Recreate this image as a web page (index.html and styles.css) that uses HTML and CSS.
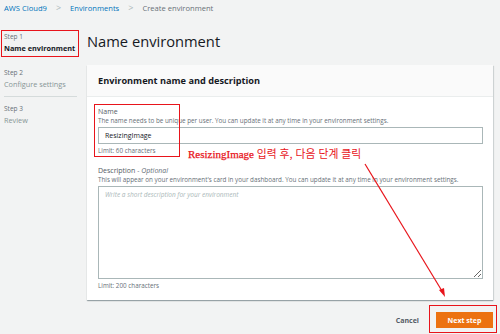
FILE: index.html
```html
<!DOCTYPE html>
<html lang="ko">
<head>
    <meta charset="UTF-8">
    <meta name="viewport" content="width=device-width, initial-scale=1.0">
    <title>Create environment</title>
    <link rel="stylesheet" href="styles.css">
</head>
<body>

    <div class="breadcrumb">
        <a href="#">AWS Cloud9</a>
        <span class="sep">&gt;</span>
        <a href="#">Environments</a>
        <span class="sep">&gt;</span>
        <span class="current">Create environment</span>
    </div>

    <div class="layout">
        <!-- Wizard steps -->
        <ul class="steps">
            <li class="step active">
                <div class="step-num">Step 1</div>
                <div class="step-name">Name environment</div>
            </li>
            <li class="step">
                <div class="step-num">Step 2</div>
                <div class="step-name">Configure settings</div>
            </li>
            <li class="step">
                <div class="step-num">Step 3</div>
                <div class="step-name">Review</div>
            </li>
        </ul>

        <div class="main">
            <h1>Name environment</h1>

            <div class="card">
                <div class="card-header">Environment name and description</div>
                <div class="card-body">
                    <div class="field">
                        <div class="label">Name</div>
                        <div class="hint">The name needs to be unique per user. You can update it at any time in your environment settings.</div>
                        <input class="input" type="text" value="ResizingImage">
                        <div class="limit">Limit: 60 characters</div>
                    </div>
                    <div class="field">
                        <div class="label">Description <em>- Optional</em></div>
                        <div class="hint">This will appear on your environment's card in your dashboard. You can update it at any time in your environment settings.</div>
                        <textarea class="textarea" placeholder="Write a short description for your environment"></textarea>
                        <div class="limit">Limit: 200 characters</div>
                    </div>
                </div>
            </div>

            <div class="actions">
                <button class="btn-link">Cancel</button>
                <button class="btn-primary">Next step</button>
            </div>
        </div>
    </div>

    <!-- Annotations drawn over the screenshot -->
    <div class="mark mark-step"></div>
    <div class="mark mark-name"></div>
    <div class="mark mark-next"></div>
    <div class="note">ResizingImage <span class="ko">입력 후, 다음 단계 클릭</span></div>
    <svg class="arrow" width="500" height="334" viewBox="0 0 500 334">
        <line x1="365" y1="164" x2="442" y2="291" stroke="#e8141b" stroke-width="1.2"/>
        <polygon points="445,297 439,290 444,288" fill="#e8141b"/>
    </svg>

</body>
</html>
```

FILE: styles.css
```css
body {
    margin: 0;
    width: 500px;
    height: 334px;
    overflow: hidden;
    background: #f2f3f3;
    font-family: "Open Sans", Arial, sans-serif;
    color: #16191f;
    position: relative;
}

.breadcrumb {
    height: 15px;
    padding: 0 4px;
    display: flex;
    align-items: center;
    gap: 9px;
    font-size: 7.6px;
}

.breadcrumb a {
    color: #0073bb;
    text-decoration: none;
}

.breadcrumb .sep {
    color: #aab7b8;
    font-size: 9px;
}

.breadcrumb .current {
    color: #687078;
}

.layout {
    display: flex;
    margin-top: 16px;
}

.steps {
    list-style: none;
    margin: 0;
    padding: 0 0 0 4px;
    width: 73px;
}

.step {
    padding: 1px 0 6px;
    margin-bottom: 6px;
    border-bottom: 1px solid #d5dbdb;
}

.step.active {
    border-bottom-color: transparent;
}

.step:last-child {
    border-bottom: none;
}

.step-num {
    font-size: 6.5px;
    line-height: 10px;
    color: #687078;
}

.step-name {
    font-size: 7.3px;
    line-height: 12px;
    color: #879596;
    white-space: nowrap;
}

.step.active .step-name {
    color: #16191f;
    font-weight: bold;
}

.main {
    flex: 1;
    padding: 0 7px 0 10px;
}

h1 {
    margin: 0;
    font-size: 14.7px;
    font-weight: normal;
    line-height: 20px;
    color: #16191f;
}

.card {
    margin-top: 14px;
    background: #fff;
    box-shadow: 0 1px 1px rgba(0, 28, 36, 0.3), 1px 1px 1px rgba(0, 28, 36, 0.1);
}

.card-header {
    height: 31px;
    line-height: 31px;
    padding: 0 11px;
    font-size: 9.2px;
    font-weight: bold;
    border-bottom: 1px solid #eaeded;
    background: #fafafa;
}

.card-body {
    padding: 9px 10px 10px 11px;
}

.field + .field {
    margin-top: 10px;
}

.label {
    font-size: 7px;
    line-height: 11px;
    color: #545b64;
}

.label em {
    color: #687078;
}

.hint {
    font-size: 6.3px;
    line-height: 8px;
    margin-bottom: 2px;
    color: #687078;
    white-space: nowrap;
}

.input,
.textarea {
    display: block;
    box-sizing: border-box;
    width: 100%;
    margin: 0;
    border: 1px solid #aab7b8;
    font-family: inherit;
    color: #16191f;
}

.input {
    height: 17px;
    padding: 0 6px;
    font-size: 7px;
}

.textarea {
    height: 93px;
    padding: 3px 6px;
    font-size: 6.5px;
    resize: vertical;
}

.textarea::placeholder {
    font-style: italic;
    color: #aab7b8;
}

.limit {
    margin-top: 2px;
    font-size: 6.3px;
    line-height: 9px;
    color: #687078;
}

.actions {
    display: flex;
    justify-content: flex-end;
    align-items: center;
    gap: 17px;
    margin-top: 12px;
}

.btn-link {
    border: none;
    background: none;
    padding: 0;
    font-family: inherit;
    font-size: 7px;
    font-weight: bold;
    color: #545b64;
}

.btn-primary {
    width: 57px;
    height: 16px;
    border: none;
    background: #ec7211;
    color: #fff;
    font-family: inherit;
    font-size: 7px;
    font-weight: bold;
}

/* annotation overlay */
.mark {
    position: absolute;
    border: 1.5px solid #e8141b;
}

.mark-step {
    left: 1px;
    top: 30px;
    width: 76px;
    height: 25px;
}

.mark-name {
    left: 94px;
    top: 104px;
    width: 84px;
    height: 51px;
}

.mark-next {
    left: 429px;
    top: 305px;
    width: 66px;
    height: 26px;
}

.note {
    position: absolute;
    left: 188px;
    top: 145px;
    font-family: "Liberation Serif", "Noto Sans CJK KR", serif;
    font-size: 11px;
    -webkit-text-stroke: 0.25px #e8141b;
    color: #e8141b;
}

.note .ko {
    font-family: "Noto Sans CJK KR", sans-serif;
    font-size: 10.8px;
    -webkit-text-stroke: 0;
}

.arrow {
    position: absolute;
    left: 0;
    top: 0;
}
```
